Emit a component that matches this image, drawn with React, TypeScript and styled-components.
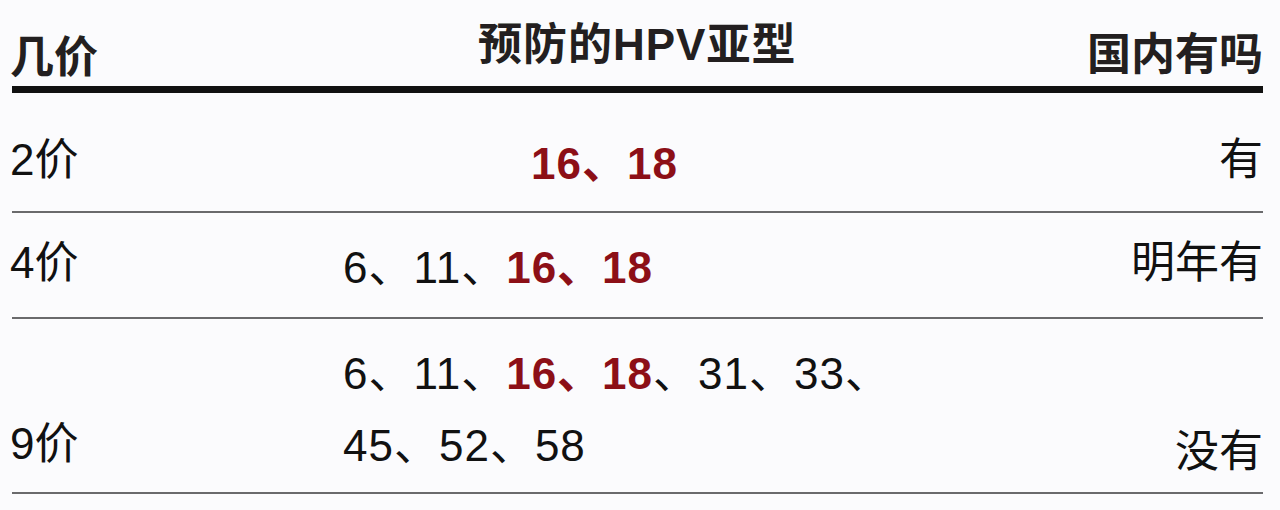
import * as React from 'react';
import styled, { createGlobalStyle } from 'styled-components';

const GlobalStyle = createGlobalStyle`
  html, body {
    margin: 0;
    padding: 0;
    background: #fbfbfd;
  }
  body {
    font-family: 'Liberation Sans', 'Noto Sans CJK SC', sans-serif;
    color: #111;
  }
`;

type Part = { text: string; hot?: boolean };

const rows: {
  label: string;
  lines: Part[][];
  domestic: string;
  height: number;
  labelTop: number;
  linesTop: number;
  linesIndent: number;
  domesticTop: number;
}[] = [
  {
    label: '2价',
    lines: [[{ text: '16、18', hot: true }]],
    domestic: '有',
    height: 118,
    labelTop: 45,
    linesTop: 35,
    linesIndent: 188,
    domesticTop: 45,
  },
  {
    label: '4价',
    lines: [[{ text: '6、11、' }, { text: '16、18', hot: true }]],
    domestic: '明年有',
    height: 104,
    labelTop: 28,
    linesTop: 19,
    linesIndent: 0,
    domesticTop: 28,
  },
  {
    label: '9价',
    lines: [
      [{ text: '6、11、' }, { text: '16、18', hot: true }, { text: '、31、33、' }],
      [{ text: '45、52、58' }],
    ],
    domestic: '没有',
    height: 173,
    labelTop: 103,
    linesTop: 19,
    linesIndent: 0,
    domesticTop: 111,
  },
];

export default function App() {
  return (
    <>
      <GlobalStyle />
      <Page>
        <HeadRow>
          <LabelCell $top={36}>
            <HeadText>几价</HeadText>
          </LabelCell>
          <TypesCell $top={23} $indent={135}>
            <HeadText>预防的HPV亚型</HeadText>
          </TypesCell>
          <DomesticCell $top={33}>
            <HeadText>国内有吗</HeadText>
          </DomesticCell>
        </HeadRow>
        {rows.map((row) => (
          <BodyRow key={row.label} $height={row.height}>
            <LabelCell $top={row.labelTop}>{row.label}</LabelCell>
            <TypesCell $top={row.linesTop} $indent={row.linesIndent}>
              {row.lines.map((line, i) => (
                <TypeLine key={i}>
                  {line.map((part, j) =>
                    part.hot ? <Hot key={j}>{part.text}</Hot> : <span key={j}>{part.text}</span>,
                  )}
                </TypeLine>
              ))}
            </TypesCell>
            <DomesticCell $top={row.domesticTop}>{row.domestic}</DomesticCell>
          </BodyRow>
        ))}
      </Page>
    </>
  );
}

const Page = styled.div`
  width: 1280px;
  height: 510px;
  box-sizing: border-box;
  padding: 0 17px 0 12px;
  background: #fbfbfd;
`;

const HeadRow = styled.div`
  display: flex;
  height: 86px;
  border-bottom: 7px solid #111;
`;

const BodyRow = styled.div<{ $height: number }>`
  display: flex;
  height: ${(p) => p.$height}px;
  border-bottom: 2px solid #6a6a6c;
`;

const Cell = styled.div<{ $top: number }>`
  padding-top: ${(p) => p.$top}px;
  font-size: 44px;
  line-height: 44px;
  white-space: nowrap;
`;

const LabelCell = styled(Cell)`
  width: 333px;
  flex: none;
  margin-left: -2px;
`;

const TypesCell = styled(Cell)<{ $indent: number }>`
  flex: 1;
  padding-left: ${(p) => p.$indent}px;
  letter-spacing: 1px;
`;

const DomesticCell = styled(Cell)`
  flex: none;
  text-align: right;
`;

const HeadText = styled.span`
  font-weight: 700;
  color: #231f20;
`;

const TypeLine = styled.div`
  line-height: 72px;
`;

const Hot = styled.span`
  color: #8c0f17;
  font-weight: 700;
`;
